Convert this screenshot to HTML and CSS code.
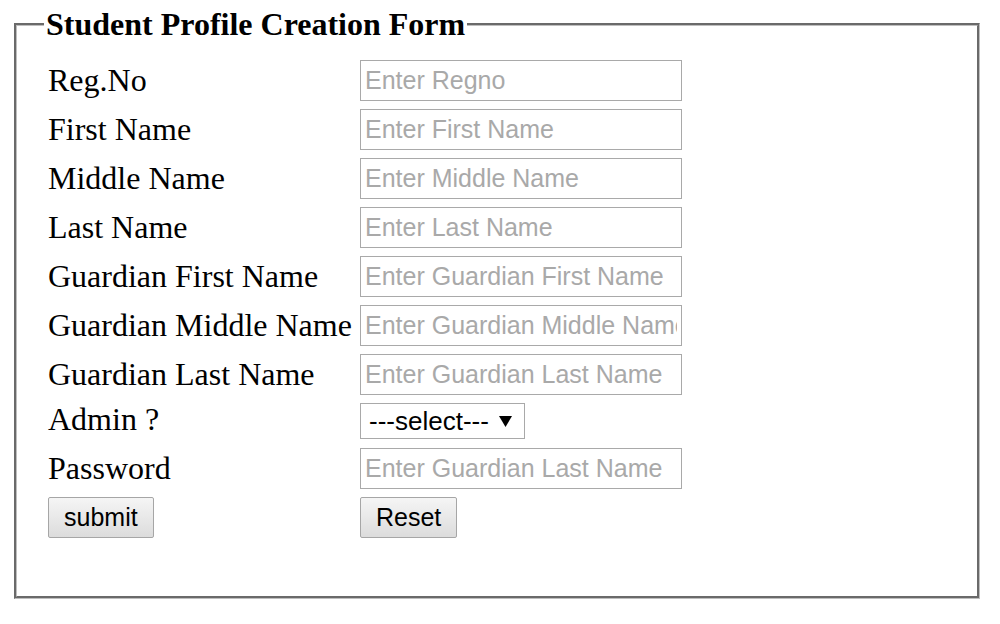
FILE: index.html
```html
<!DOCTYPE html>
<html>
<head>
<meta charset="utf-8">
<title>Student Profile Creation Form</title>
<link rel="stylesheet" href="styles.css">
</head>
<body>
<form class="profile-form">
  <fieldset class="panel">
    <legend class="panel-title">Student Profile Creation Form</legend>
    <div class="grid">
      <label class="lbl" for="regno">Reg.No</label>
      <input class="field" id="regno" type="text" placeholder="Enter Regno">

      <label class="lbl" for="fname">First Name</label>
      <input class="field" id="fname" type="text" placeholder="Enter First Name">

      <label class="lbl" for="mname">Middle Name</label>
      <input class="field" id="mname" type="text" placeholder="Enter Middle Name">

      <label class="lbl" for="lname">Last Name</label>
      <input class="field" id="lname" type="text" placeholder="Enter Last Name">

      <label class="lbl" for="gfname">Guardian First Name</label>
      <input class="field" id="gfname" type="text" placeholder="Enter Guardian First Name">

      <label class="lbl" for="gmname">Guardian Middle Name</label>
      <input class="field" id="gmname" type="text" placeholder="Enter Guardian Middle Name">

      <label class="lbl" for="glname">Guardian Last Name</label>
      <input class="field" id="glname" type="text" placeholder="Enter Guardian Last Name">

      <label class="lbl lbl-short" for="admin">Admin ?</label>
      <span class="select-wrap">
        <select class="choice" id="admin">
          <option>---select---</option>
          <option>Yes</option>
          <option>No</option>
        </select>
        <svg class="select-arrow" width="13" height="11" viewBox="0 0 13 11" aria-hidden="true"><polygon points="0,0 13,0 6.5,11" fill="#000"/></svg>
      </span>

      <label class="lbl" for="pwd">Password</label>
      <input class="field" id="pwd" type="password" placeholder="Enter Guardian Last Name">

      <div class="cell"><button class="btn" type="submit">submit</button></div>
      <div class="cell"><button class="btn" type="reset">Reset</button></div>
    </div>
  </fieldset>
</form>
</body>
</html>
```
FILE: styles.css
```css
html, body {
  margin: 0;
  padding: 0;
  background: #ffffff;
}

.profile-form {
  padding: 9px 20px 0 14px;
}

.panel {
  margin: 0;
  min-width: 0;
  border: 3px groove #bebebe;
  padding: 21px 20px 58px 31px;
}

.panel-title {
  font-family: "Liberation Serif", "Times New Roman", serif;
  font-weight: bold;
  font-size: 32px;
  line-height: 30px;
  color: #000;
  padding: 0 2px;
  margin-left: -4px;
}

.grid {
  display: grid;
  grid-template-columns: 312px auto;
  row-gap: 8px;
  justify-content: start;
  align-items: center;
}

.lbl {
  font-family: "Liberation Serif", "Times New Roman", serif;
  font-size: 32px;
  line-height: 39px;
  color: #000;
  white-space: nowrap;
}

.lbl-short {
  align-self: start;
  line-height: 32px;
}

.field {
  box-sizing: border-box;
  width: 322px;
  height: 41px;
  margin: 0;
  border: 1px solid #a9a9a9;
  padding: 0 4px;
  font-family: "Liberation Sans", Arial, sans-serif;
  font-size: 25px;
  color: #000;
  background: #fff;
  outline: none;
}

.field::placeholder {
  color: #a9a9a9;
  opacity: 1;
}

.select-wrap {
  position: relative;
  display: block;
  width: 165px;
  height: 37px;
  align-self: start;
  justify-self: start;
}

.select-arrow {
  position: absolute;
  left: 139px;
  top: 13px;
  pointer-events: none;
}

.choice {
  appearance: none;
  -webkit-appearance: none;
  box-sizing: border-box;
  display: block;
  width: 165px;
  height: 36px;
  margin: 0;
  border: 1px solid #a9a9a9;
  border-radius: 0;
  padding: 0 30px 0 8px;
  background: #fff;
  font-family: "Liberation Sans", Arial, sans-serif;
  font-size: 26px;
  color: #000;
}

.cell {
  display: flex;
}

.btn {
  box-sizing: border-box;
  height: 41px;
  margin: 0;
  padding: 0 15px;
  border: 1px solid #a6a6a6;
  border-radius: 2px;
  background: linear-gradient(#f5f5f5, #dcdcdc);
  font-family: "Liberation Sans", Arial, sans-serif;
  font-size: 25px;
  color: #000;
}
```
